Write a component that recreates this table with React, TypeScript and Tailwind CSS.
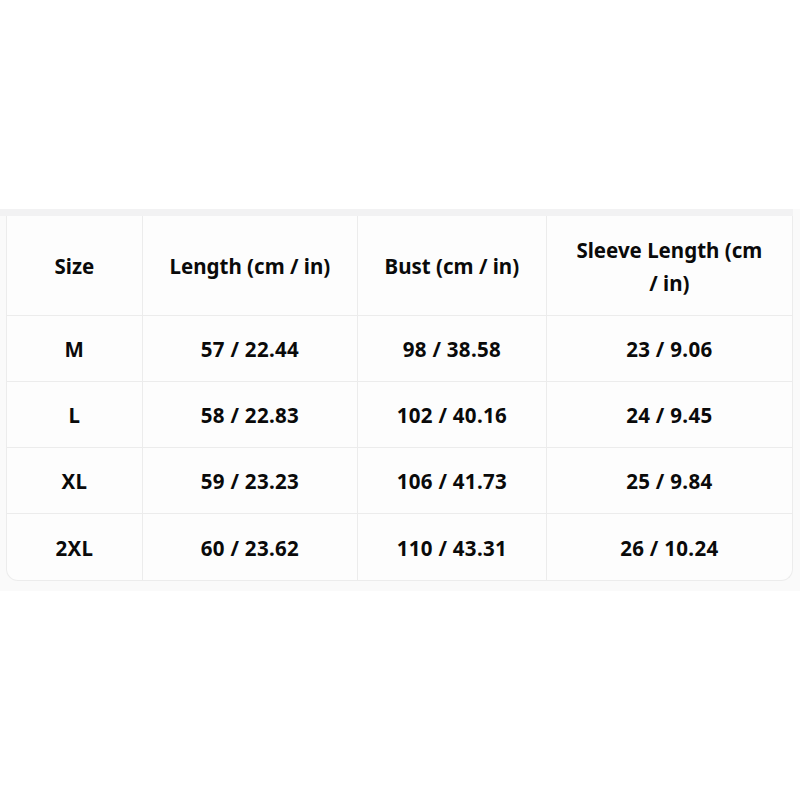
import React from "react";

const rows = [
  ["M", "57 / 22.44", "98 / 38.58", "23 / 9.06"],
  ["L", "58 / 22.83", "102 / 40.16", "24 / 9.45"],
  ["XL", "59 / 23.23", "106 / 41.73", "25 / 9.84"],
  ["2XL", "60 / 23.62", "110 / 43.31", "26 / 10.24"],
];

const widths = ["w-[136px]", "w-[216px]", "w-[189px]", "w-[246px]"];

export default function App() {
  return (
    <div className="w-[800px] h-[800px] bg-white" style={{ fontFamily: '"Noto Sans", "Open Sans", sans-serif' }}>
      <div className="h-[209px]" />
      <div className="h-[382px] bg-[#fafafa] pl-[6px]">
        <div className="h-[7px] bg-[#f2f2f3] -ml-[6px] w-[793px]" />
        <div className="w-[787px] bg-[#fdfdfd] border-l border-b border-r border-[#ececec] rounded-b-[12px] overflow-hidden text-[#0a0a0a] font-bold text-[20.5px]">
          <div className="flex h-[100px] border-b border-[#ececec]">
            {["Size", "Length (cm / in)", "Bust (cm / in)", "Sleeve Length (cm / in)"].map((h, i) => (
              <div
                key={i}
                className={`${widths[i]} ${i < 3 ? "border-r border-[#ececec] px-[20px]" : "px-[28px]"} flex items-center justify-center text-center leading-[33px] pt-[2px]`}
              >
                {h}
              </div>
            ))}
          </div>
          {rows.map((r, ri) => (
            <div key={ri} className={`flex h-[66px] ${ri < 3 ? "border-b border-[#ececec]" : ""}`}>
              {r.map((c, i) => (
                <div
                  key={i}
                  className={`${widths[i]} ${i < 3 ? "border-r border-[#ececec]" : ""} flex items-center justify-center pt-[2px] tracking-[0.3px]`}
                >
                  {c}
                </div>
              ))}
            </div>
          ))}
        </div>
      </div>
    </div>
  );
}
